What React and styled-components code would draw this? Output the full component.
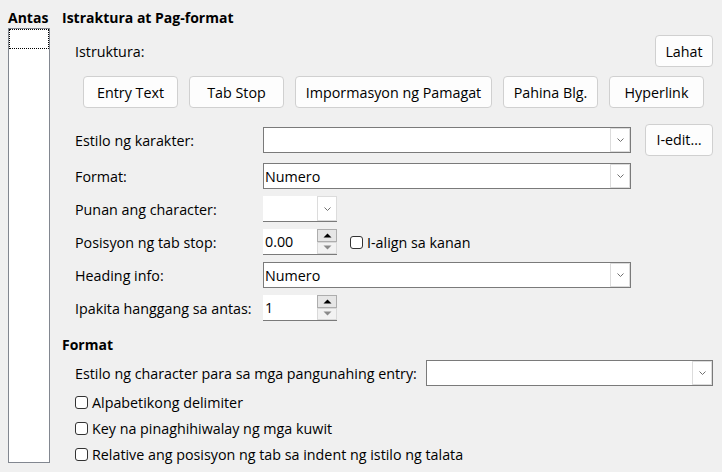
import styled, { createGlobalStyle } from "styled-components";

const GlobalStyle = createGlobalStyle`
  html, body {
    margin: 0;
    padding: 0;
    background: #f0f0f0;
  }
  body {
    font-family: "Open Sans", "Noto Sans", sans-serif;
    font-size: 14.3px;
    color: #000;
  }
`;

const Chevron = () => (
  <svg width="9" height="6" viewBox="0 0 9 6">
    <path d="M1.5 1.5 L4.5 4.5 L7.5 1.5" fill="none" stroke="#707070" strokeWidth="1" />
  </svg>
);

const Combo = ({ value, width }) => (
  <ComboBox $width={width}>
    <ComboText>{value}</ComboText>
    <DropButton>
      <Chevron />
    </DropButton>
  </ComboBox>
);

const SmallCombo = () => (
  <FlatField>
    <FlatText />
    <DropButton>
      <Chevron />
    </DropButton>
  </FlatField>
);

const Spin = ({ value }) => (
  <FlatField>
    <FlatText>{value}</FlatText>
    <SpinButtons>
      <SpinArrow $up>
        <svg width="9" height="5" viewBox="0 0 9 5">
          <path d="M0.5 4.5 L4.5 0.5 L8.5 4.5 Z" fill="#000" />
        </svg>
      </SpinArrow>
      <SpinArrow>
        <svg width="9" height="5" viewBox="0 0 9 5">
          <path d="M0.5 0.5 L4.5 4.5 L8.5 0.5 Z" fill="#8a8a8a" />
        </svg>
      </SpinArrow>
    </SpinButtons>
  </FlatField>
);

const Check = ({ children, first }) => (
  <CheckRow $first={first}>
    <CheckBox />
    <span>{children}</span>
  </CheckRow>
);

export default function App() {
  return (
    <>
      <GlobalStyle />
      <Page>
        <LevelColumn>
          <Heading>Antas</Heading>
          <ListBox>
            <FocusItem />
          </ListBox>
        </LevelColumn>

        <Main>
          <Heading>Istraktura at Pag-format</Heading>
          <Section>
            <StructureRow>
              <span>Istruktura:</span>
              <Button $w={58}>Lahat</Button>
            </StructureRow>
            <TokenRow>
              <Button $w={95}>Entry Text</Button>
              <Button $w={95}>Tab Stop</Button>
              <Button $w={197}>Impormasyon ng Pamagat</Button>
              <Button $w={95}>Pahina Blg.</Button>
              <Button $w={95}>Hyperlink</Button>
            </TokenRow>

            <FormGrid>
              <Label>Estilo ng karakter:</Label>
              <Inline>
                <Combo value="" width={368} />
                <Button $w={68}>I-edit…</Button>
              </Inline>

              <Label>Format:</Label>
              <Combo value="Numero" width={368} />

              <Label>Punan ang character:</Label>
              <SmallCombo />

              <Label>Posisyon ng tab stop:</Label>
              <Inline $gap={13}>
                <Spin value="0.00" />
                <Check>I-align sa kanan</Check>
              </Inline>

              <Label>Heading info:</Label>
              <Combo value="Numero" width={368} />

              <Label>Ipakita hanggang sa antas:</Label>
              <Spin value="1" />
            </FormGrid>
          </Section>

          <FormatHeading>Format</FormatHeading>
          <Section>
            <EntryRow>
              <span>Estilo ng character para sa mga pangunahing entry:</span>
              <Combo value="" />
            </EntryRow>
            <Check first>Alpabetikong delimiter</Check>
            <Check>Key na pinaghihiwalay ng mga kuwit</Check>
            <Check>Relative ang posisyon ng tab sa indent ng istilo ng talata</Check>
          </Section>
        </Main>
      </Page>
    </>
  );
}

const Page = styled.div`
  display: flex;
  width: 722px;
  height: 472px;
  box-sizing: border-box;
  padding: 8px 9px 8px 8px;
  gap: 12px;
`;

const LevelColumn = styled.div`
  display: flex;
  flex-direction: column;
  width: 42px;
`;

const Heading = styled.div`
  font-weight: 700;
  font-size: 14px;
  height: 20px;
  line-height: 20px;
  white-space: nowrap;
`;

const ListBox = styled.div`
  flex: 1;
  margin-bottom: 1px;
  background: #fff;
  border: 1px solid #828790;
`;

const FocusItem = styled.div`
  height: 18px;
  border: 1px dotted #000;
`;

const Main = styled.div`
  flex: 1;
  display: flex;
  flex-direction: column;
`;

const Section = styled.div`
  padding-left: 13px;
  display: flex;
  flex-direction: column;
`;

const StructureRow = styled.div`
  display: flex;
  align-items: center;
  justify-content: space-between;
  margin-top: 7px;
  height: 32px;
`;

const TokenRow = styled.div`
  display: flex;
  gap: 11px;
  margin-top: 9px;
  padding-left: 8px;
`;

const Button = styled.div`
  box-sizing: border-box;
  width: ${(p) => p.$w}px;
  height: 32px;
  display: flex;
  align-items: center;
  justify-content: center;
  background: #fdfdfd;
  border: 1px solid #d0d0d0;
  border-radius: 4px;
  white-space: nowrap;
`;

const FormGrid = styled.div`
  display: grid;
  grid-template-columns: 188px 1fr;
  grid-template-rows: 33px repeat(5, 26px);
  row-gap: 7px;
  margin-top: 15px;
  align-items: center;
`;

const Label = styled.div`
  white-space: nowrap;
  padding-top: 1px;
`;

const Inline = styled.div`
  display: flex;
  align-items: center;
  gap: ${(p) => p.$gap ?? 14}px;
`;

const ComboBox = styled.div`
  box-sizing: border-box;
  display: flex;
  width: ${(p) => (p.$width ? `${p.$width}px` : "auto")};
  flex: ${(p) => (p.$width ? "none" : 1)};
  height: 26px;
  background: #fff;
  border: 1px solid #7a7a7a;
`;

const ComboText = styled.div`
  flex: 1;
  line-height: 25px;
  padding-left: 1px;
`;

const DropButton = styled.div`
  box-sizing: border-box;
  width: 20px;
  display: flex;
  align-items: center;
  justify-content: center;
  background: #fff;
  border: 1px solid #dcdcdc;
`;

const FlatField = styled.div`
  box-sizing: border-box;
  display: flex;
  width: 74px;
  height: 26px;
  background: #fff;
  border-bottom: 1px solid #7a7a7a;
`;

const FlatText = styled.div`
  flex: 1;
  line-height: 26px;
  padding-left: 2px;
`;

const SpinButtons = styled.div`
  width: 20px;
  display: flex;
  flex-direction: column;
`;

const SpinArrow = styled.div`
  box-sizing: border-box;
  flex: 1;
  display: flex;
  align-items: center;
  justify-content: center;
  background: ${(p) => (p.$up ? "#e6e6e6" : "#f2f2f2")};
  border: 1px solid ${(p) => (p.$up ? "#adadad" : "#d9d9d9")};
`;

const CheckRow = styled.div`
  display: flex;
  align-items: center;
  gap: 4px;
  height: 26px;
  margin-top: ${(p) => (p.$first ? 3 : 0)}px;
  white-space: nowrap;
`;

const CheckBox = styled.span`
  box-sizing: border-box;
  width: 13px;
  height: 13px;
  border: 1px solid #333;
  border-radius: 3px;
  background: #fff;
`;

const FormatHeading = styled(Heading)`
  margin-top: 14px;
`;

const EntryRow = styled.div`
  display: flex;
  align-items: center;
  gap: 9px;
  height: 26px;
  margin-top: 5px;
`;
